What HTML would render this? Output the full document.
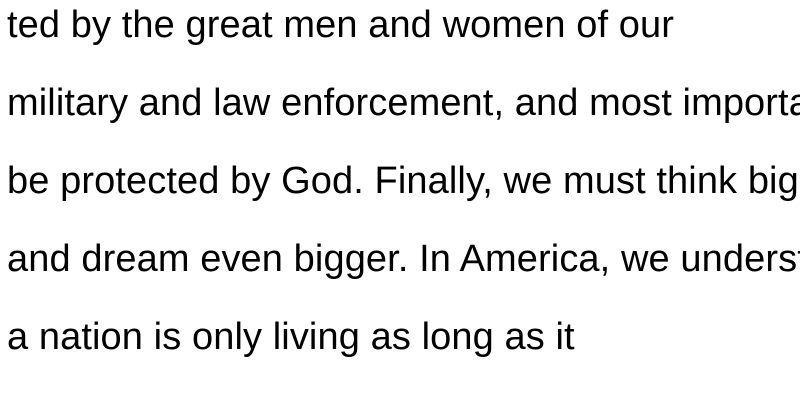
<!DOCTYPE html>
<html><head><meta charset="utf-8"><style>
html,body{margin:0;padding:0;background:#fff;width:800px;height:400px;overflow:hidden}
.t{position:absolute;left:7px;top:-14px;font-family:"Liberation Sans",sans-serif;font-size:38px;line-height:78px;color:#000;white-space:nowrap;letter-spacing:0.1px}
</style></head><body>
<div class="t">ted by the great men and women of our<br>military and law enforcement, and most importa<br>be protected by God. Finally, we must think big<br>and dream even bigger. In America, we understa<br>a nation is only living as long as it</div>
</body></html>
